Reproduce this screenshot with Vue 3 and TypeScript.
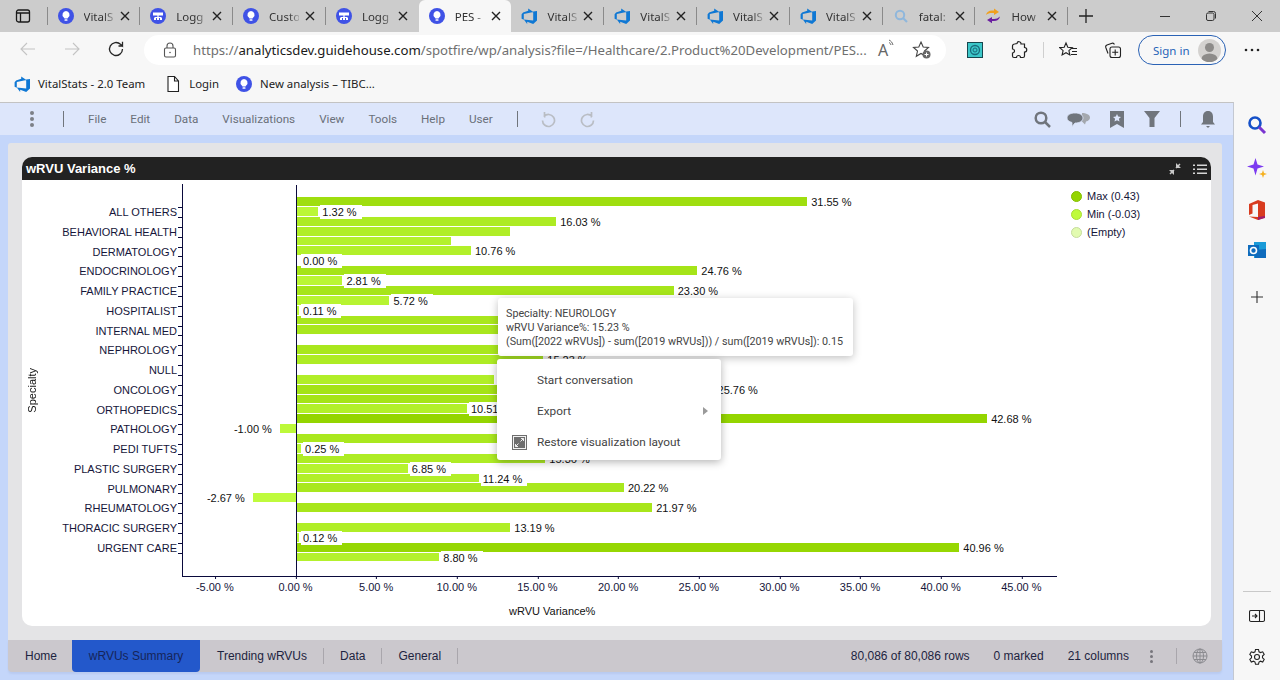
<template>
  <div class="page">
    <svg class="defs" width="0" height="0" aria-hidden="true">
      <symbol id="fav-bulb" viewBox="0 0 16 16">
        <circle cx="8" cy="8" r="8" fill="#3f52e6" />
        <path d="M8 3a3.6 3.6 0 0 0-2.2 6.4c.4.4.6.8.6 1.2h3.2c0-.4.2-.8.6-1.2A3.6 3.6 0 0 0 8 3z" fill="#fff" />
        <rect x="6.5" y="11.2" width="3" height="1.6" rx=".6" fill="#fff" />
      </symbol>
      <symbol id="fav-log" viewBox="0 0 16 16">
        <circle cx="8" cy="8" r="8" fill="#3f52e6" />
        <path d="M3 4.5h10v3H3zM7.4 7.5h1.2v2H7.4zM4.5 9h7v1H4.5zM4 10h2v2H4zM7 10h2v2H7zM10 10h2v2h-2z" fill="#fff" />
      </symbol>
      <symbol id="fav-ado" viewBox="0 0 16 16">
        <path d="M16 3v9.6L12.2 16l-6-2.2v2.1L2.8 11.6l9.4.8V3.6zM12.4 3.9L7.200 .6v2.200L2.100 4.400.6 6.300v4.400l2.200 1V5.900z" fill="#0f78d4" />
      </symbol>
      <symbol id="fav-search" viewBox="0 0 16 16">
        <circle cx="7" cy="7" r="4.200" fill="none" stroke="#8fb7dc" stroke-width="2" />
        <path d="M10 10l4 4" stroke="#8fb7dc" stroke-width="2.200" />
      </symbol>
      <symbol id="fav-how" viewBox="0 0 16 16">
        <path d="M1 7c.6-3 3-4.500 6-4.500h2V.5l5 3.500-5 3V5H7C4.500 5 3 5.500 1 7z" fill="#f0a020" />
        <path d="M15 8.500c-.6 3-3 4.500-6 4.500H7v2.200L2 12l5-3v2h2c2.500 0 4-.8 6-2.500z" fill="#6a1fa0" />
      </symbol>
    </svg>

    <div class="tabstrip">
      <div class="tabtoggle">
        <svg width="16" height="16" viewBox="0 0 16 16" fill="none" stroke="#1a1a1a" stroke-width="1.300">
          <rect x="1.500" y="2" width="13" height="12" rx="2" />
          <path d="M1.500 5h13M5.500 5v9" />
        </svg>
      </div>
      <div
        v-for="(t, i) in tabs"
        :key="i"
        class="tab"
        :class="{ 'tab--active': t.active, 'tab--nosep': tabs[i + 1]?.active || t.active }"
      >
        <svg class="tab__icon" width="16" height="16"><use :href="'#' + t.icon" /></svg>
        <span class="tab__title">{{ t.title }}</span>
        <svg class="tab__close" width="10" height="10" viewBox="0 0 10 10">
          <path d="M1 1l8 8M9 1l-8 8" stroke="#222" stroke-width="1.400" />
        </svg>
      </div>
      <svg class="newtab" width="16" height="16" viewBox="0 0 16 16">
        <path d="M8 1v14M1 8h14" stroke="#222" stroke-width="1.300" />
      </svg>
      <div class="winbtns">
        <svg width="12" height="12" viewBox="0 0 12 12"><path d="M1 6.500h10" stroke="#333" /></svg>
        <svg width="12" height="12" viewBox="0 0 12 12" fill="none" stroke="#333">
          <rect x="1.500" y="3" width="7.500" height="7.500" rx="1.500" />
          <path d="M3.500 1.500h5a2 2 0 0 1 2 2v5" />
        </svg>
        <svg width="12" height="12" viewBox="0 0 12 12"><path d="M1 1l10 10M11 1L1 11" stroke="#333" /></svg>
      </div>
    </div>

    <div class="toolbar">
      <svg class="nav" width="16" height="16" viewBox="0 0 16 16" fill="none" stroke="#c4c4c4" stroke-width="1.100">
        <path d="M15 8H1M7 2L1 8l6 6" />
      </svg>
      <svg class="nav nav--fwd" width="16" height="16" viewBox="0 0 16 16" fill="none" stroke="#c4c4c4" stroke-width="1.100">
        <path d="M1 8h14M9 2l6 6-6 6" />
      </svg>
      <svg class="nav nav--reload" width="18" height="18" viewBox="0 0 18 18" fill="none" stroke="#262626" stroke-width="1.300">
        <path d="M15.500 9a6.500 6.500 0 1 1-2-4.700L15.500 6V1.800M15.500 6h-4" />
      </svg>
      <div class="omnibox">
        <svg width="14" height="16" viewBox="0 0 14 16" fill="none" stroke="#555" stroke-width="1.100">
          <rect x="1.500" y="6" width="11" height="9" rx="1.500" />
          <path d="M4 6V4a3 3 0 0 1 6 0v2" />
          <circle cx="7" cy="10.500" r=".8" fill="#555" stroke="none" />
        </svg>
        <div class="url">https://<b>analyticsdev.guidehouse.com</b>/spotfire/wp/analysis?file=/Healthcare/2.Product%20Development/PES...</div>
        <span class="readaloud">A<svg width="7" height="9" viewBox="0 0 7 9" fill="none" stroke="#666"><path d="M1 1c2 1 3 2 4 5M1 3.500c1 .5 1.500 1 2 2.500" /></svg></span>
        <svg class="favadd" width="20" height="20" viewBox="0 0 20 20">
          <path d="M9 2l2.200 5 5.300.5-4 3.500 1.200 5.300L9 13.500 4.300 16.300 5.500 11l-4-3.500L6.800 7z" fill="none" stroke="#444" stroke-width="1.100" />
          <circle cx="14.500" cy="14.500" r="4" fill="#666" />
          <path d="M14.500 12.500v4M12.500 14.500h4" stroke="#fff" />
        </svg>
      </div>
      <div class="tools">
        <svg width="16" height="16" viewBox="0 0 16 16">
          <rect x=".5" y=".5" width="15" height="15" fill="#3cc7c9" stroke="#16474f" />
          <circle cx="8" cy="8" r="4.500" fill="none" stroke="#1a6b7c" stroke-width="1.300" />
          <circle cx="8" cy="8" r="2" fill="none" stroke="#1a6b7c" />
        </svg>
        <svg class="t-puzzle" width="18" height="18" viewBox="0 0 18 18" fill="none" stroke="#222" stroke-width="1.200">
          <path d="M7 2.500a2 2 0 0 1 4 .5h3.500v3.500a2 2 0 0 1 0 4.500V15a1.500 1.500 0 0 1-1.500 1.500h-2.500a2 2 0 0 0-4 0H4A1.500 1.500 0 0 1 2.500 15v-3a2 2 0 0 0 0-4V5A2 2 0 0 1 4.500 3z" />
        </svg>
        <span class="t-sep"></span>
        <svg class="t-fav" width="20" height="18" viewBox="0 0 20 18" fill="none" stroke="#222" stroke-width="1.100">
          <path d="M7 2l1.800 4.200 4.500.4-3.400 3 1 4.400L7 11.700 3.100 14l1-4.400-3.400-3 4.500-.4zM13 7.500h5M13 10.500h5M12 13.500h6" />
        </svg>
        <svg class="t-coll" width="18" height="18" viewBox="0 0 18 18" fill="none" stroke="#222" stroke-width="1.100">
          <path d="M4 12.500L1.800 6.500a2 2 0 0 1 1.200-2.500L8 2.200c1-.3 2 .2 2.400 1.300" />
          <rect x="6" y="6" width="10.500" height="10.500" rx="2" />
          <path d="M11.200 8.500v6M8.200 11.300h6" />
        </svg>
        <div class="signin">
          <span>Sign in</span>
          <svg width="23" height="23" viewBox="0 0 23 23">
            <defs><clipPath id="av"><circle cx="11.500" cy="11.500" r="11.500" /></clipPath></defs>
            <circle cx="11.500" cy="11.500" r="11.500" fill="#d4d2d0" />
            <g clip-path="url(#av)" fill="#8d8b89">
              <circle cx="11.500" cy="8.500" r="4.500" />
              <ellipse cx="11.500" cy="20" rx="8" ry="5.500" />
            </g>
          </svg>
        </div>
        <svg class="t-more" width="16" height="4" viewBox="0 0 16 4" fill="#222">
          <circle cx="2" cy="2" r="1.300" /><circle cx="8" cy="2" r="1.300" /><circle cx="14" cy="2" r="1.300" />
        </svg>
      </div>
    </div>

    <div class="bookmarks">
      <div class="bm bm--first">
        <svg width="16" height="16"><use href="#fav-ado" /></svg>
        <span>VitalStats - 2.0 Team</span>
      </div>
      <div class="bm">
        <svg width="16" height="18" viewBox="0 0 16 18" fill="#fff" stroke="#222" stroke-width="1.100">
          <path d="M3 1.500h6.500L13.500 6v10.500H3zM9.500 1.500V6h4" />
        </svg>
        <span>Login</span>
      </div>
      <div class="bm">
        <svg width="16" height="16"><use href="#fav-bulb" /></svg>
        <span>New analysis – TIBC...</span>
      </div>
    </div>

    <div class="body">
      <div class="app">
        <header class="appbar">
          <span class="kebab"><i></i><i></i><i></i></span>
          <span class="appbar__sep"></span>
          <nav class="appmenu">
            <span v-for="m in menus" :key="m">{{ m }}</span>
          </nav>
          <span class="appbar__sep"></span>
          <svg class="undo" width="16" height="18" viewBox="0 0 16 18" fill="none" stroke="#b9bdc4" stroke-width="1.700">
            <path d="M4 6.500a6 6 0 1 1-1.500 4M4.500 2v5h-.2" />
          </svg>
          <svg class="redo" width="16" height="18" viewBox="0 0 16 18" fill="none" stroke="#b9bdc4" stroke-width="1.700">
            <path d="M12 6.500a6 6 0 1 0 1.500 4M11.500 2v5h.2" />
          </svg>
          <div class="appbar__right">
            <svg class="search" width="17" height="17" viewBox="0 0 17 17" fill="none" stroke="#70757c" stroke-width="2.500">
              <circle cx="7" cy="7" r="5.300" />
              <path d="M11 11l5 5" />
            </svg>
            <svg width="23" height="16" viewBox="0 0 23 16">
              <path d="M15 2c4 0 8 1.500 8 4.500 0 2-1.500 3.500-4 4l-1 3-3-3z" fill="#a4a8ae" />
              <path d="M8 2c4.500 0 8 1.800 8 5s-3.500 5-8 5l-3 3.500V11.500C2 10.700 0 9.200 0 7c0-3.200 3.500-5 8-5z" fill="#70757c" stroke="#dde6fb" stroke-width=".8" />
            </svg>
            <svg width="14" height="17" viewBox="0 0 14 17">
              <path d="M0 0h14v17l-7-4-7 4z" fill="#70757c" />
              <path d="M7 3l1.200 2.600 2.800.3-2.100 1.900.6 2.800L7 9.200 4.500 10.600l.6-2.800L3 5.900l2.800-.3z" fill="#dde6fb" />
            </svg>
            <svg width="16" height="16" viewBox="0 0 16 16">
              <path d="M0 0h16l-5.500 7v9h-5V7z" fill="#70757c" />
            </svg>
            <span class="appbar__sep"></span>
            <svg width="14" height="17" viewBox="0 0 14 17">
              <path d="M7 0c3.500 0 5 2.500 5 5.500V11l2 2.500H0L2 11V5.500C2 2.500 3.500 0 7 0z" fill="#70757c" />
              <path d="M5 15h4l-2 2z" fill="#70757c" />
            </svg>
          </div>
        </header>

        <section class="panel">
          <article class="card">
            <div class="card__head">
              <span>wRVU Variance %</span>
              <div class="card__actions">
                <svg width="12" height="12" viewBox="0 0 12 12" fill="#c9c9c9">
                  <path d="M7 0l5 5H7zM0 7h5v5z" />
                  <path d="M7 5l4-4M5 7l-4 4" stroke="#c9c9c9" stroke-width="1.500" />
                </svg>
                <svg width="14" height="12" viewBox="0 0 14 12" fill="#d6d6d6">
                  <path d="M0 1.500h2v1.500H0zM0 5.500h2V7H0zM0 9.500h2V11H0zM4 1.500h10V3H4zM4 5.500h10V7H4zM4 9.500h10V11H4z" />
                </svg>
              </div>
            </div>
            <div class="chart">
              <div class="ytitle"><span>Specialty</span></div>
              <div class="cats">
                <div v-for="c in categories" :key="c" class="cat">{{ c }}</div>
              </div>
              <div class="yticks"><i v-for="n in 36" :key="n"></i></div>
              <div class="plotcol">
                <div class="plot">
                  <span class="zero"></span>
                  <div v-for="(r, i) in rows" :key="i" class="row">
                    <template v-if="r.value !== null">
                      <span class="bar" :style="barStyle(r.value)"></span>
                      <span v-if="r.label" class="val" :class="{ 'val--neg': r.value < 0 }" :style="labelStyle(r.value)">{{ fmt(r.value) }}</span>
                    </template>
                  </div>
                </div>
                <div class="xaxis">
                  <div v-for="t in xTicks" :key="t" class="xtick" :style="{ left: 113.5 + t * 16.13 + 'px' }">{{ t.toFixed(2) }} %</div>
                </div>
                <div class="xtitle">wRVU Variance%</div>
              </div>
              <ul class="legend">
                <li v-for="l in legend" :key="l.text">
                  <i :style="{ background: l.fill, borderColor: l.edge }"></i>{{ l.text }}
                </li>
              </ul>
            </div>
          </article>
        </section>

        <footer class="tabbar">
          <span class="sheet sheet--home">Home</span>
          <span class="sheet sheet--active">wRVUs Summary</span>
          <span class="sheet sheet--sep sheet--trend">Trending wRVUs</span>
          <span class="sheet sheet--sep">Data</span>
          <span class="sheet sheet--sep">General</span>
          <div class="tabbar__info">
            <span>80,086 of 80,086 rows</span>
            <span>0 marked</span>
            <span>21 columns</span>
            <span class="kebab kebab--sm"><i></i><i></i><i></i></span>
            <span class="tabbar__sep"></span>
            <svg width="16" height="16" viewBox="0 0 16 16" fill="none" stroke="#8b8b90">
              <circle cx="8" cy="8" r="7" />
              <ellipse cx="8" cy="8" rx="3.500" ry="7" />
              <path d="M8 1v14M1 8h14M2 4.500h12M2 11.500h12" />
            </svg>
          </div>
        </footer>
      </div>

      <aside class="edge">
        <svg width="22" height="22" viewBox="0 0 22 22" fill="none">
          <circle cx="9" cy="9" r="5.500" stroke="#1550c8" stroke-width="2.600" />
          <path d="M13 13l6 6" stroke="#7a35d0" stroke-width="3" />
        </svg>
        <svg width="22" height="22" viewBox="0 0 22 22">
          <path d="M9.500 1l2 6.500 6.500 2-6.500 2-2 7-2-7-6.500-2 6.500-2z" fill="#7c3bf0" />
          <path d="M17 13l1 3 3 1-3 1-1 3-1-3-3-1 3-1z" fill="#f5b020" />
        </svg>
        <svg width="18" height="20" viewBox="0 0 18 20">
          <path d="M1 4l9-4 7 2.500v15L10 20l-9-3.500L10 17V3.500L4.500 5v8.500L1 15z" fill="#d83b1f" />
          <path d="M10 17l7-1v2l-7 2z" fill="#a01d6c" />
        </svg>
        <svg width="18" height="18" viewBox="0 0 18 18">
          <rect x="6" y="1" width="12" height="16" fill="#1a9bd8" />
          <path d="M7 9l11-1v9H7z" fill="#0f6cbd" />
          <rect y="4" width="11" height="11" fill="#0f6cbd" />
          <circle cx="5.500" cy="9.500" r="3" fill="none" stroke="#fff" stroke-width="1.600" />
        </svg>
        <svg class="edge__plus" width="14" height="14" viewBox="0 0 14 14">
          <path d="M7 1v12M1 7h12" stroke="#333" stroke-width="1.100" />
        </svg>
        <span class="edge__sep"></span>
        <svg class="edge__panel" width="16" height="14" viewBox="0 0 16 14" fill="none" stroke="#222" stroke-width="1.100">
          <rect x=".5" y="1.500" width="15" height="11" rx="1.500" />
          <path d="M10.500 1.500v11M3 7h5M6 5l2 2-2 2" />
        </svg>
        <svg class="edge__gear" width="18" height="18" viewBox="0 0 18 18" fill="none" stroke="#222" stroke-width="1.100">
          <circle cx="9" cy="9" r="2.500" />
          <path d="M7.500 1.500h3l.5 2.300 1.500.8 2.200-.8 1.500 2.600-1.700 1.600v1.800l1.700 1.600-1.500 2.600-2.200-.8-1.500.8-.5 2.300h-3l-.5-2.300-1.500-.8-2.200.8-1.500-2.600 1.700-1.600V8L1.800 6.400l1.500-2.600 2.200.8L7 3.800z" />
        </svg>
      </aside>
    </div>

    <div class="tip">
      <div>Specialty: NEUROLOGY</div>
      <div>wRVU Variance%: 15.23 %</div>
      <div>(Sum([2022 wRVUs]) - sum([2019 wRVUs])) / sum([2019 wRVUs]): 0.15</div>
    </div>

    <div class="ctx">
      <div class="ctx__item">Start conversation</div>
      <div class="ctx__item">Export<span class="ctx__arrow"></span></div>
      <div class="ctx__item">
        <svg class="ctx__icon" width="15" height="15" viewBox="0 0 15 15">
          <rect x=".5" y=".5" width="14" height="14" fill="#f2f2f2" stroke="#6e6e6e" />
          <rect x="2" y="2" width="11" height="11" fill="#6e6e6e" />
          <path d="M8.500 6.500l3-3M6.500 8.500l-3 3M9 3.500h2.500V6M3.500 9v2.500H6" stroke="#eee" fill="none" />
        </svg>
        Restore visualization layout
      </div>
    </div>
  </div>
</template>

<script setup lang="ts">
interface BarRow {
  value: number | null
  label: boolean
}

const axisX = 114
const barX = 115
const pxPerPct = 16.17
const minColor = [191, 251, 60]
const maxColor = [148, 213, 0]

const tabs = [
  { title: 'VitalS', icon: 'fav-bulb' },
  { title: 'Logg', icon: 'fav-log' },
  { title: 'Custo', icon: 'fav-bulb' },
  { title: 'Logg', icon: 'fav-log' },
  { title: 'PES -', icon: 'fav-bulb', active: true },
  { title: 'VitalS', icon: 'fav-ado' },
  { title: 'VitalS', icon: 'fav-ado' },
  { title: 'VitalS', icon: 'fav-ado' },
  { title: 'VitalS', icon: 'fav-ado' },
  { title: 'fatal:', icon: 'fav-search' },
  { title: 'How', icon: 'fav-how' },
]

const menus = ['File', 'Edit', 'Data', 'Visualizations', 'View', 'Tools', 'Help', 'User']

const categories = [
  'ALL OTHERS',
  'BEHAVIORAL HEALTH',
  'DERMATOLOGY',
  'ENDOCRINOLOGY',
  'FAMILY PRACTICE',
  'HOSPITALIST',
  'INTERNAL MED',
  'NEPHROLOGY',
  'NULL',
  'ONCOLOGY',
  'ORTHOPEDICS',
  'PATHOLOGY',
  'PEDI TUFTS',
  'PLASTIC SURGERY',
  'PULMONARY',
  'RHEUMATOLOGY',
  'THORACIC SURGERY',
  'URGENT CARE',
]

// [value, show label]; null is an empty slot
const raw: [number | null, boolean][] = [
  [31.55, true], [1.32, true], [16.03, true], [13.19, false], [9.5, false], [10.76, true],
  [0, true], [24.76, true], [2.81, true], [23.3, true], [5.72, true], [0.11, true],
  [21, false], [21, false], [null, false], [21, false], [15.23, true], [null, false],
  [12.18, false], [25.76, true], [25, false], [10.51, true], [42.68, true], [-1, true],
  [20, false], [0.25, true], [15.36, true], [6.85, true], [11.24, true], [20.22, true],
  [-2.67, true], [21.97, true], [null, false], [13.19, true], [0.12, true], [40.96, true],
  [8.8, true],
]
const rows: BarRow[] = raw.map(([value, label]) => ({ value, label }))

const xTicks = [-5, 0, 5, 10, 15, 20, 25, 30, 35, 40, 45]

const legend = [
  { text: 'Max (0.43)', fill: '#94d500', edge: '#84bd00' },
  { text: 'Min (-0.03)', fill: '#bffb3c', edge: '#a9de35' },
  { text: '(Empty)', fill: '#e2fbb0', edge: '#c6dc9c' },
]

function barColor(v: number) {
  const t = Math.min(1, Math.max(0, (v + 3) / 46))
  const c = minColor.map((m, i) => Math.round(m + (maxColor[i] - m) * t))
  return `rgb(${c[0]}, ${c[1]}, ${c[2]})`
}

function barStyle(v: number) {
  const w = Math.abs(v) * pxPerPct
  return {
    left: (v < 0 ? axisX - w : barX) + 'px',
    width: w + 'px',
    background: barColor(v),
  }
}

function labelStyle(v: number) {
  if (v < 0) return { right: 875 - axisX + Math.abs(v) * pxPerPct + 'px' }
  return { left: Math.max(barX + v * pxPerPct + 2, barX + 4) + 'px' }
}

function fmt(v: number) {
  return v.toFixed(2) + ' %'
}
</script>

<style scoped>
.page {
  position: relative;
  width: 1280px;
  height: 680px;
  overflow: hidden;
  background: #f7f7f7;
  font-family: "Liberation Sans", Arial, sans-serif;
  color: #1a1a1a;
}

.defs {
  position: absolute;
}

/* browser chrome */
.tabstrip {
  display: flex;
  align-items: center;
  height: 32px;
  background: #cccccc;
  font-family: "Noto Sans", sans-serif;
  font-size: 11.5px;
}

.tabtoggle {
  display: flex;
  align-items: center;
  justify-content: center;
  width: 47.500px;
  padding-right: 1px;
  box-sizing: border-box;
  height: 18px;
  border-right: 1px solid #8a8a8a;
}

.tab {
  position: relative;
  display: flex;
  align-items: center;
  flex: none;
  width: 92.800px;
  height: 32px;
  box-sizing: border-box;
  padding-left: 10px;
  color: #333;
}

.tab::after {
  content: "";
  position: absolute;
  right: 0;
  top: 7px;
  height: 18px;
  width: 1px;
  background: #8a8a8a;
}

.tab--nosep::after {
  display: none;
}

.tab--active {
  background: #f7f7f7;
  border-radius: 6px 6px 0 0;
}

.tab__icon {
  flex: none;
}

.tab__title {
  flex: none;
  width: 30px;
  margin-left: 10px;
  white-space: nowrap;
  -webkit-mask-image: linear-gradient(to right, #000 65%, rgba(0, 0, 0, 0.25));
  mask-image: linear-gradient(to right, #000 65%, rgba(0, 0, 0, 0.25));
}

.tab__close {
  margin-left: 6px;
}

.newtab {
  margin-left: 10px;
}

.winbtns {
  display: flex;
  gap: 34px;
  margin-left: auto;
  padding-right: 17px;
}

.toolbar {
  position: relative;
  display: flex;
  align-items: center;
  height: 33px;
  padding-left: 20px;
}

.nav {
  flex: none;
  margin-right: 28px;
}

.nav--fwd {
  margin-right: 27px;
}

.nav--reload {
  margin-right: 19px;
}

.omnibox {
  display: flex;
  align-items: center;
  width: 802px;
  height: 30px;
  margin-top: 3px;
  padding-left: 19px;
  box-sizing: border-box;
  background: #fff;
  border-radius: 15px;
  flex: none;
}

.url {
  margin-left: 16px;
  width: 676px;
  white-space: nowrap;
  overflow: hidden;
  font-family: "Noto Sans", sans-serif;
  font-size: 13.200px;
  color: #6f6f6f;
}

.url b {
  font-weight: 400;
  color: #1a1a1a;
}

.readaloud {
  display: inline-flex;
  margin-left: 9px;
  font-family: "Noto Sans", sans-serif;
  font-size: 16px;
  color: #666;
}

.favadd {
  margin-left: 17px;
}

.tools {
  display: flex;
  align-items: center;
  margin-top: 3px;
  margin-left: 21px;
}

.t-puzzle {
  margin-left: 27px;
}

.t-sep {
  width: 1px;
  height: 16px;
  margin-left: 15px;
  background: #cfcfcf;
}

.t-fav {
  margin-left: 15px;
}

.t-coll {
  margin-left: 25px;
}

.signin {
  display: flex;
  align-items: center;
  justify-content: space-between;
  width: 88px;
  height: 30px;
  margin-left: 16px;
  padding: 0 4px 0 14px;
  box-sizing: border-box;
  border: 1.500px solid #2a62b5;
  border-radius: 15px;
  font-family: "Noto Sans", sans-serif;
  font-size: 11.500px;
  color: #2563b8;
}

.t-more {
  margin-left: 18px;
}

.bookmarks {
  display: flex;
  align-items: center;
  height: 37px;
  padding-left: 14px;
  gap: 17px;
  font-family: "Noto Sans", sans-serif;
  font-size: 11.400px;
  color: #222;
}

.bm {
  display: flex;
  align-items: center;
  gap: 8px;
}

.bm--first {
  margin-right: 3px;
}

/* body */
.body {
  display: flex;
  height: 578px;
}

.app {
  display: flex;
  flex-direction: column;
  width: 1234px;
  height: 578px;
  box-sizing: border-box;
  background: #c4d6fa;
  border-top: 1px solid #c3c3c3;
  border-right: 1px solid #c3c8d2;
}

.appbar {
  display: flex;
  align-items: center;
  flex: none;
  height: 32px;
  padding-left: 30px;
  background: #dde6fb;
  font-family: Roboto, sans-serif;
  font-size: 11.700px;
  color: #6a7079;
}

.kebab {
  display: flex;
  flex-direction: column;
  gap: 2px;
}

.kebab i {
  display: block;
  width: 4px;
  height: 4px;
  border-radius: 50%;
  background: #7c8087;
}

.appbar__sep {
  display: block;
  flex: none;
  width: 1px;
  height: 16px;
  margin-left: 29px;
  background: #70757c;
}

.appmenu {
  display: flex;
  gap: 24px;
  margin-left: 24px;
}

.appmenu + .appbar__sep {
  margin-left: 24px;
}

.undo {
  margin-left: 22px;
}

.redo {
  margin-left: 24px;
}

.appbar__right {
  display: flex;
  align-items: center;
  gap: 20px;
  margin-left: auto;
  padding-right: 18px;
}

.appbar__right .appbar__sep {
  margin-left: 0;
}

.appbar__right .search {
  margin-right: -4px;
}

.panel {
  flex: none;
  height: 497px;
  margin: 8px 11px 0 8px;
  padding: 14px 11px 14px 14px;
  box-sizing: border-box;
  background: #e4e4e6;
  border-radius: 3px 3px 0 0;
}

.card {
  height: 100%;
  background: #fff;
  border-radius: 10px;
  overflow: hidden;
}

.card__head {
  display: flex;
  align-items: center;
  justify-content: space-between;
  height: 23px;
  padding: 0 4px;
  background: #222;
  color: #fff;
  font-size: 13px;
  font-weight: 700;
}

.card__actions {
  display: flex;
  align-items: center;
  gap: 12px;
}

.chart {
  display: flex;
  padding-top: 4px;
  font-size: 11px;
  color: #111;
}

.ytitle {
  display: flex;
  align-items: center;
  justify-content: center;
  flex: none;
  width: 20px;
  height: 412px;
}

.ytitle span {
  writing-mode: vertical-rl;
  transform: rotate(180deg);
}

.cats {
  flex: none;
  width: 136px;
  padding-top: 19px;
  box-sizing: border-box;
  text-align: right;
}

.cat {
  height: 19.780px;
  line-height: 19.780px;
  padding-right: 1px;
  white-space: nowrap;
  color: #16163a;
}

.yticks {
  flex: none;
  width: 4px;
  margin-top: 23px;
}

.yticks i {
  display: block;
  height: 9.889px;
  box-sizing: border-box;
  border-top: 1px solid #0a0a3c;
}

.plotcol {
  flex: none;
  width: 875px;
}

.plot {
  position: relative;
  height: 393px;
  padding-top: 13px;
  box-sizing: border-box;
  border-left: 1px solid #0a0a3c;
  border-bottom: 1px solid #0a0a3c;
}

.zero {
  position: absolute;
  left: 113px;
  top: 1px;
  bottom: 0;
  width: 1px;
  background: #0a0a3c;
  z-index: 2;
}

.row {
  position: relative;
  height: 9.889px;
  margin-left: -1px;
}

.bar {
  position: absolute;
  top: 0;
  height: 8.889px;
}

.val {
  position: absolute;
  top: -2px;
  z-index: 1;
  height: 14px;
  line-height: 14px;
  padding: 0 5px 0 2px;
  background: #fff;
  white-space: nowrap;
  color: #111;
}

.val--neg {
  padding: 0 8px 0 2px;
}

.xaxis {
  position: relative;
  height: 22px;
}

.xtick {
  position: absolute;
  top: 4px;
  transform: translateX(-50%);
  white-space: nowrap;
  color: #16163a;
}

.xtick::before {
  content: "";
  position: absolute;
  left: 50%;
  top: -4px;
  width: 1px;
  height: 2px;
  background: #0a0a3c;
}

.xtitle {
  margin-top: 6px;
  padding-left: 327px;
  color: #111;
}

.legend {
  flex: none;
  list-style: none;
  margin: 3px 0 0 14px;
  padding: 0;
}

.legend li {
  display: flex;
  align-items: center;
  gap: 5px;
  height: 18px;
  color: #16163a;
}

.legend i {
  display: block;
  width: 9px;
  height: 9px;
  border: 1px solid;
  border-radius: 50%;
}

.tabbar {
  display: flex;
  align-items: center;
  flex: none;
  height: 32px;
  margin: 0 11px 0 8px;
  background: #cbc8cd;
  border-radius: 0 0 4px 4px;
  box-shadow: 0 2px 2px #b9cbf0;
  font-size: 12px;
  color: #1d2440;
}

.sheet {
  display: flex;
  align-items: center;
  flex: none;
  height: 16px;
  padding: 0 16px;
  white-space: nowrap;
}

.sheet--sep {
  border-right: 1px solid #a9a6ac;
}

.sheet--trend {
  padding-left: 17px;
}

.sheet--home {
  width: 64px;
  box-sizing: border-box;
  padding: 0 0 0 17px;
}

.sheet--active {
  justify-content: center;
  width: 128px;
  height: 32px;
  padding: 0;
  box-sizing: border-box;
  background: #2358cb;
  border-radius: 0 0 4px 4px;
  color: #16255a;
}

.tabbar__info {
  display: flex;
  align-items: center;
  gap: 24px;
  margin-left: auto;
  padding-right: 14px;
}

.kebab--sm {
  gap: 2px;
  margin-left: -3px;
  margin-right: -1px;
}

.kebab--sm i {
  width: 3px;
  height: 3px;
  background: #77767c;
}

.tabbar__sep {
  width: 1px;
  height: 16px;
  margin-right: -9px;
  background: #a9a6ac;
}

.edge {
  display: flex;
  flex-direction: column;
  align-items: center;
  flex: none;
  width: 46px;
  height: 578px;
  padding-top: 12px;
  box-sizing: border-box;
  background: #f7f7f7;
  gap: 21px;
}

.edge__plus {
  margin-top: 10px;
}

.edge__sep {
  width: 28px;
  height: 1px;
  margin-top: auto;
  background: #c9c9c9;
}

.edge__panel {
  margin-top: -4px;
}

.edge__gear {
  margin-bottom: 14px;
  margin-top: 4px;
}

/* overlays */
.tip {
  position: absolute;
  left: 498px;
  top: 298px;
  z-index: 5;
  width: 355px;
  height: 58px;
  padding: 9px 8px;
  box-sizing: border-box;
  background: #fff;
  border-radius: 3px;
  box-shadow: 0 2px 8px rgba(0, 0, 0, 0.25);
  font-family: Roboto, sans-serif;
  font-size: 10.750px;
  line-height: 14px;
  color: #444;
  white-space: nowrap;
}

.ctx {
  position: absolute;
  left: 497px;
  top: 359px;
  z-index: 6;
  width: 224px;
  height: 101px;
  padding-top: 6px;
  box-sizing: border-box;
  background: #fff;
  border-radius: 3px;
  box-shadow: 0 2px 8px rgba(0, 0, 0, 0.3);
  font-family: Roboto, sans-serif;
  font-size: 11.800px;
  color: #444;
}

.ctx__item {
  position: relative;
  height: 31px;
  line-height: 31px;
  padding-left: 40px;
}

.ctx__icon {
  position: absolute;
  left: 15px;
  top: 8px;
}

.ctx__arrow {
  position: absolute;
  right: 13px;
  top: 11px;
  border-left: 5px solid #9a9a9a;
  border-top: 4px solid transparent;
  border-bottom: 4px solid transparent;
}
</style>
